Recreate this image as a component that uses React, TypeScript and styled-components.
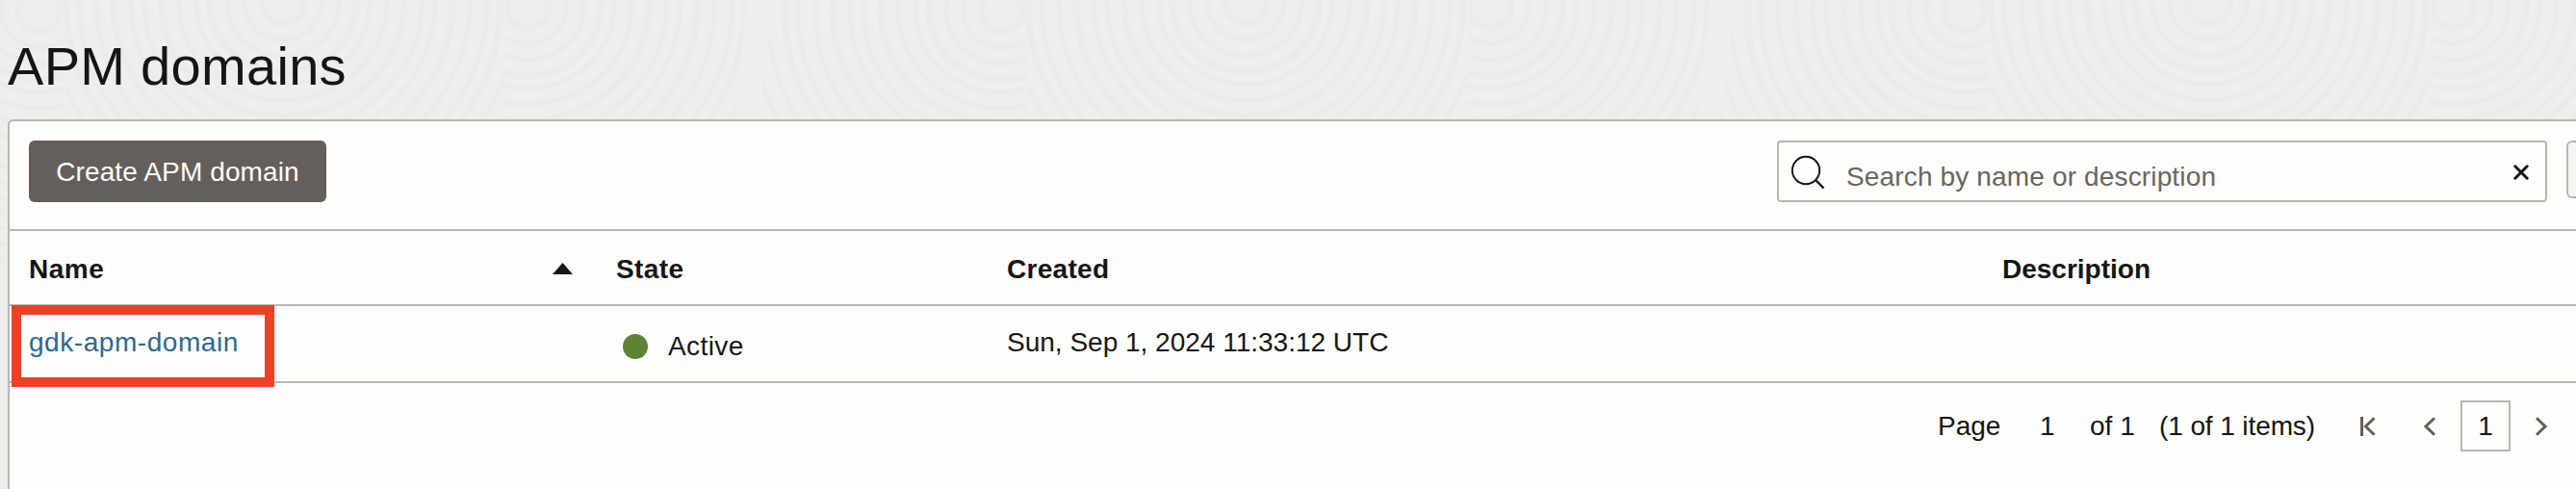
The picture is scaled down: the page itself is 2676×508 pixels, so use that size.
import React from "react";
import styled, { createGlobalStyle } from "styled-components";

const line = "#bbb5ae";

const Global = createGlobalStyle`
  * { box-sizing: border-box; }
  body {
    margin: 0;
    overflow: hidden;
    background: #efeeec;
    color: #161513;
    font-family: "Liberation Sans", Arial, sans-serif;
    font-size: 28px;
    line-height: 32px;
  }
`;

const Page = styled.div`
  position: relative;
  height: 508px;
  padding-left: 8px;
  overflow: hidden;
`;

const Backdrop = styled.svg`
  position: absolute;
  inset: 0;
  z-index: -1;
`;

const Title = styled.h1`
  margin: 0;
  height: 124px;
  padding-top: 37px;
  font-size: 56px;
  font-weight: 400;
  line-height: 64px;
  letter-spacing: 0.3px;
`;

const Panel = styled.main`
  width: 2760px;
  height: 440px;
  border: 2px solid ${line};
  border-radius: 6px;
  background: #fdfdfb;
`;

const Toolbar = styled.div`
  display: flex;
  height: 114px;
  padding: 20px 0 0 20px;
  border-bottom: 2px solid ${line};
`;

const CreateButton = styled.button`
  width: 309px;
  height: 64px;
  padding: 1px 0 0;
  border: 0;
  border-radius: 6px;
  background: #655f5b;
  color: #fdfdfb;
  font: inherit;
  letter-spacing: 0.12px;
  white-space: nowrap;
`;

const SearchBox = styled.div`
  display: flex;
  width: 800px;
  height: 64px;
  margin-left: 1507px;
  padding: 0 17px 0 13px;
  border: 2px solid ${line};
  border-radius: 4px;
`;

const SearchIcon = styled.svg`
  margin-top: 13px;
  flex: none;
`;

const Placeholder = styled.span`
  flex: 1;
  padding: 20px 0 0 21px;
  color: #6b6460;
  letter-spacing: 0.15px;
`;

const ClearIcon = styled.svg`
  flex: none;
  margin-top: 23px;
`;

const SideButton = styled.button`
  width: 80px;
  height: 60px;
  margin-left: 20px;
  border: 2px solid ${line};
  border-radius: 6px;
  background: #f5f4f2;
`;

const Row = styled.div<{ $height: number }>`
  display: grid;
  grid-template-columns: 610px 406px 1034px 1fr;
  height: ${(p) => p.$height}px;
  border-bottom: 2px solid ${line};
`;

const HeadCell = styled.div<{ $spacing: number }>`
  display: flex;
  justify-content: space-between;
  padding: 24px 25px 0 20px;
  font-weight: 700;
  letter-spacing: ${(p) => p.$spacing}px;
`;

const SortIcon = styled.svg`
  margin-top: 9px;
`;

const Cell = styled.div`
  padding: 22px 0 0 20px;
`;

const NameLink = styled.a`
  position: relative;
  color: #2c6a90;
  letter-spacing: 0.55px;
`;

const Marker = styled.span`
  position: absolute;
  left: -18px;
  top: -23px;
  width: 273px;
  height: 85px;
  border: 10px solid #ec4027;
`;

const State = styled.div`
  display: flex;
  align-items: center;
  gap: 21px;
  height: 32px;
  margin: 26px 0 0 27px;
  letter-spacing: 0.4px;
`;

const Dot = styled.span`
  width: 26px;
  height: 26px;
  border-radius: 50%;
  background: #5c8432;
`;

const Pager = styled.nav`
  display: flex;
  align-items: center;
  height: 53px;
  margin: 18px 0 0 2003px;
  white-space: pre;
`;

const PageInput = styled.span`
  width: 93px;
  padding-left: 41px;
`;

const PageLabel = styled.span`
  width: 65px;
`;

const Total = styled.span`
  width: 72px;
`;

const Count = styled.span`
  width: 209px;
  letter-spacing: -0.1px;
`;

const PagerIcon = styled.svg<{ $gap: number }>`
  flex: none;
  margin-right: ${(p) => p.$gap}px;
`;

const CurrentPage = styled.span`
  flex: none;
  width: 52px;
  height: 53px;
  margin-right: 26px;
  padding-top: 9px;
  border: 2px solid ${line};
  text-align: center;
`;

const radii = Array.from({ length: 16 }, (_, i) => 22 + i * 17 + (i % 4));

const Rings = ({ cx, cy, clip }: { cx: number; cy: number; clip: string }) => (
  <g clipPath={`url(#${clip})`} fill="none">
    {radii.map((r, i) => (
      <React.Fragment key={r}>
        <ellipse cx={cx} cy={cy} rx={r} ry={r * 0.93} stroke="#ecebe9" strokeWidth={i % 3 ? 5 : 7} />
        <ellipse cx={cx} cy={cy} rx={r + 7} ry={r * 0.93 + 7} stroke="#f0efed" strokeWidth="3" />
      </React.Fragment>
    ))}
  </g>
);

const Texture = () => (
  <Backdrop width="2676" height="508">
    <defs>
      <clipPath id="left"><path d="M28 0H290V500H-40Z" /></clipPath>
      <clipPath id="mid"><path d="M290 0H750L735 500H300Z" /></clipPath>
      <clipPath id="right"><path d="M750 0H1000L950 500H735Z" /></clipPath>
      <pattern id="grain" width="1000" height="508" patternUnits="userSpaceOnUse" x="-224">
        <Rings cx={265} cy={12} clip="left" />
        <Rings cx={518} cy={4} clip="mid" />
        <Rings cx={772} cy={8} clip="right" />
      </pattern>
    </defs>
    <rect width="2676" height="508" fill="url(#grain)" />
  </Backdrop>
);

export default function App() {
  return (
    <Page>
      <Global />
      <Texture />
      <Title>APM domains</Title>
      <Panel>
        <Toolbar>
          <CreateButton>Create APM domain</CreateButton>
          <SearchBox>
            <SearchIcon width="36" height="38" viewBox="0 0 36 38" fill="none" stroke="#161513" strokeWidth="2">
              <circle cx="15" cy="16" r="14.2" />
              <path d="M25 26L33.5 34.5" strokeWidth="2.4" />
            </SearchIcon>
            <Placeholder>Search by name or description</Placeholder>
            <ClearIcon width="16" height="16" viewBox="0 0 16 16" stroke="#161513" strokeWidth="3" strokeLinecap="round">
              <path d="M1.8 1.8L14.2 14.2M14.2 1.8L1.8 14.2" />
            </ClearIcon>
          </SearchBox>
          <SideButton aria-label="Filter" />
        </Toolbar>
        <Row $height={78}>
          <HeadCell $spacing={0.5}>
            Name
            <SortIcon width="21" height="12" viewBox="0 0 21 12">
              <path d="M0 12L10.5 0L21 12Z" fill="#161513" />
            </SortIcon>
          </HeadCell>
          <HeadCell $spacing={0.4}>State</HeadCell>
          <HeadCell $spacing={0.3}>Created</HeadCell>
          <HeadCell $spacing={0}>Description</HeadCell>
        </Row>
        <Row $height={80}>
          <Cell>
            <NameLink>
              gdk-apm-domain
              <Marker />
            </NameLink>
          </Cell>
          <State>
            <Dot />
            Active
          </State>
          <Cell>Sun, Sep 1, 2024 11:33:12 UTC</Cell>
          <Cell />
        </Row>
        <Pager>
          <PageLabel>Page</PageLabel>
          <PageInput>1</PageInput>
          <Total>of 1</Total>
          <Count>(1 of 1 items)</Count>
          <PagerIcon $gap={50} width="16" height="20" viewBox="0 0 16 20" fill="none" stroke="#655f5b" strokeWidth="3">
            <path d="M1.5 0V20M14.5 1.2L5.5 10L14.5 18.8" />
          </PagerIcon>
          <PagerIcon $gap={26} width="12" height="20" viewBox="0 0 12 20" fill="none" stroke="#655f5b" strokeWidth="3">
            <path d="M11 1.2L2 10L11 18.8" />
          </PagerIcon>
          <CurrentPage>1</CurrentPage>
          <PagerIcon $gap={0} width="12" height="20" viewBox="0 0 12 20" fill="none" stroke="#655f5b" strokeWidth="3">
            <path d="M1 1.2L10 10L1 18.8" />
          </PagerIcon>
        </Pager>
      </Panel>
    </Page>
  );
}
